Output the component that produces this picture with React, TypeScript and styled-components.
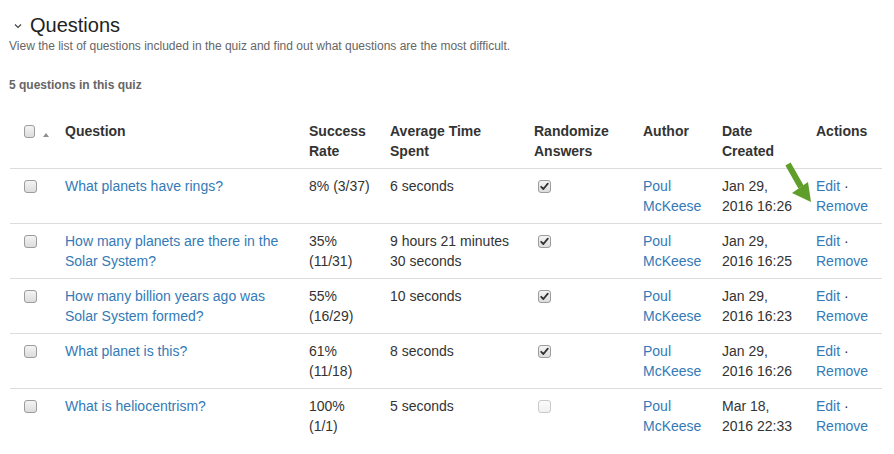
import React from "react";
import styled, { createGlobalStyle } from "styled-components";

const GlobalStyle = createGlobalStyle`
	html, body {
		margin: 0;
		padding: 0;
		background: #fff;
	}
	body {
		font-family: "Liberation Sans", Arial, sans-serif;
		font-size: 14px;
		color: #333;
	}
`;

const Page = styled.div`
	position: relative;
	padding: 13px 12px 0 9px;
	width: 894px;
	box-sizing: border-box;
`;

const TitleRow = styled.h2`
	display: flex;
	align-items: center;
	gap: 8px;
	margin: 0;
	padding-left: 5px;
	font-size: 20px;
	line-height: 24px;
	font-weight: 400;
	color: #222;
`;

const Chevron = styled.svg`
	width: 8px;
	height: 8px;
	margin-top: 2px;
`;

const Description = styled.p`
	margin: 1px 0 0;
	font-size: 12px;
	line-height: 17px;
	color: #666;
`;

const Count = styled.div`
	margin-top: 22px;
	font-size: 12px;
	line-height: 17px;
	font-weight: 700;
	color: #666;
`;

const Table = styled.table`
	margin: 20px 0 0 1px;
	width: 872px;
	border-collapse: collapse;
	table-layout: fixed;
`;

const Th = styled.th<{ $w: number }>`
	box-sizing: border-box;
	width: ${(p) => p.$w}px;
	padding: 7px 8px;
	text-align: left;
	vertical-align: top;
	font-weight: 700;
	line-height: 20px;
	color: #333;
	border-bottom: 1px solid #ddd;
`;

const Tr = styled.tr<{ $last?: boolean }>`
	border-bottom: ${(p) => (p.$last ? "none" : "1px solid #ddd")};
`;

const Td = styled.td`
	padding: 7px 8px;
	vertical-align: top;
	line-height: 20px;
	color: #333;
`;

const Link = styled.a`
	color: #337ab7;
	text-decoration: none;
	cursor: pointer;
`;

const SelectCell = styled.div`
	display: flex;
	align-items: flex-end;
	gap: 8px;
	padding-left: 6px;
`;

const SortCaret = styled.span`
	width: 0;
	height: 0;
	margin-bottom: 4px;
	border-left: 3px solid transparent;
	border-right: 3px solid transparent;
	border-bottom: 4px solid #8a8f96;
`;

const Box = styled.span<{ $disabled?: boolean; $indent?: number }>`
	display: inline-flex;
	align-items: center;
	justify-content: center;
	box-sizing: border-box;
	width: 13px;
	height: 13px;
	margin: 4px 0 3px ${(p) => p.$indent ?? 0}px;
	border: 1px solid ${(p) => (p.$disabled ? "#c9c9c9" : "#9c9c9c")};
	border-radius: 3px;
	background: ${(p) =>
		p.$disabled
			? "linear-gradient(#fafafa, #f1f1f1)"
			: "linear-gradient(#f4f4f4, #dcdcdc)"};
	vertical-align: top;
`;

const Arrow = styled.svg`
	position: absolute;
	left: 780px;
	top: 160px;
	width: 40px;
	height: 48px;
	pointer-events: none;
`;

function Checkbox({
	checked,
	disabled,
	indent,
}: {
	checked?: boolean;
	disabled?: boolean;
	indent?: number;
}) {
	return (
		<Box $disabled={disabled} $indent={indent}>
			{checked && (
				<svg width="9" height="9" viewBox="0 0 9 9">
					<path
						d="M1.2 4.8 L3.4 7 L7.8 1.6"
						fill="none"
						stroke="#333"
						strokeWidth="1.8"
						strokeLinecap="round"
						strokeLinejoin="round"
					/>
				</svg>
			)}
		</Box>
	);
}

interface Question {
	title: string;
	rate: string;
	ratio: string;
	time: string;
	randomize: boolean;
	date: string;
	time2: string;
}

const questions: Question[] = [
	{ title: "What planets have rings?", rate: "8%", ratio: "(3/37)", time: "6 seconds", randomize: true, date: "Jan 29,", time2: "2016 16:26" },
	{ title: "How many planets are there in the Solar System?", rate: "35%", ratio: "(11/31)", time: "9 hours 21 minutes 30 seconds", randomize: true, date: "Jan 29,", time2: "2016 16:25" },
	{ title: "How many billion years ago was Solar System formed?", rate: "55%", ratio: "(16/29)", time: "10 seconds", randomize: true, date: "Jan 29,", time2: "2016 16:23" },
	{ title: "What planet is this?", rate: "61%", ratio: "(11/18)", time: "8 seconds", randomize: true, date: "Jan 29,", time2: "2016 16:26" },
	{ title: "What is heliocentrism?", rate: "100%", ratio: "(1/1)", time: "5 seconds", randomize: false, date: "Mar 18,", time2: "2016 22:33" },
];

export default function App() {
	return (
		<>
			<GlobalStyle />
			<Page>
				<TitleRow>
					<Chevron viewBox="0 0 8 8">
						<path d="M1 2.5 L4 5.5 L7 2.5" fill="none" stroke="#444" strokeWidth="1.2" />
					</Chevron>
					Questions
				</TitleRow>
				<Description>
					View the list of questions included in the quiz and find out what questions are the most difficult.
				</Description>
				<Count>5 questions in this quiz</Count>
				<Table>
					<thead>
						<tr>
							<Th $w={47}>
								<SelectCell>
									<Checkbox />
									<SortCaret />
								</SelectCell>
							</Th>
							<Th $w={244}>Question</Th>
							<Th $w={81}>Success Rate</Th>
							<Th $w={144}>Average Time Spent</Th>
							<Th $w={109}>Randomize Answers</Th>
							<Th $w={79}>Author</Th>
							<Th $w={94}>Date Created</Th>
							<Th $w={74}>Actions</Th>
						</tr>
					</thead>
					<tbody>
						{questions.map((q, i) => (
							<Tr key={q.title} $last={i === questions.length - 1}>
								<Td>
									<SelectCell>
										<Checkbox />
									</SelectCell>
								</Td>
								<Td>
									<Link>{q.title}</Link>
								</Td>
								<Td>
									{q.rate} {q.ratio}
								</Td>
								<Td>{q.time}</Td>
								<Td>
									<Checkbox checked={q.randomize} disabled={!q.randomize} indent={4} />
								</Td>
								<Td>
									<Link>Poul McKeese</Link>
								</Td>
								<Td>
									{q.date} {q.time2}
								</Td>
								<Td>
									<Link>Edit</Link> · <Link>Remove</Link>
								</Td>
							</Tr>
						))}
					</tbody>
				</Table>
				<Arrow viewBox="0 0 40 48">
					<path d="M8 4 L21 27" stroke="#5f9e2a" strokeWidth="6" strokeLinecap="butt" />
					<path d="M31 42 L12 33 L28 22 Z" fill="#5f9e2a" />
				</Arrow>
			</Page>
		</>
	);
}
